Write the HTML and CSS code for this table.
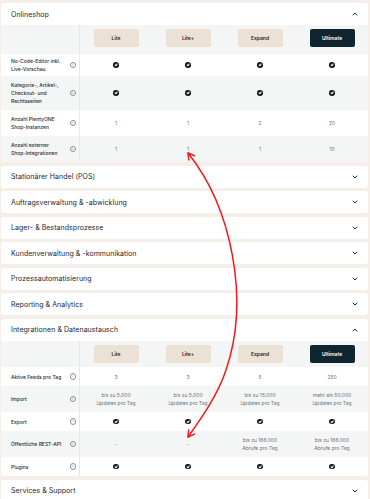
FILE: index.html
```html
<!DOCTYPE html>
<html lang="de">
<head>
  <meta charset="UTF-8" />
  <meta name="viewport" content="width=device-width, initial-scale=1" />
  <title>Tarifvergleich</title>
  <link rel="stylesheet" href="styles.css">
</head>
<body>
  <div class="page">

    <section class="panel">
      <div class="panel-head">
        <span>Onlineshop</span>
        <svg class="chev" viewBox="0 0 6 4"><polyline points="1,3 3,1 5,3" /></svg>
      </div>
      <div class="table">
        <div class="row tiers tall">
          <div class="label"></div>
          <div class="cell"><span class="tier">Lite</span></div>
          <div class="cell"><span class="tier">Lite+</span></div>
          <div class="cell"><span class="tier">Expand</span></div>
          <div class="cell"><span class="tier dark">Ultimate</span></div>
        </div>
        <div class="row tight">
          <div class="label"><span>No-Code-Editor inkl. Live-Vorschau</span><i class="info">i</i></div>
          <div class="cell"><b class="check"></b></div>
          <div class="cell"><b class="check"></b></div>
          <div class="cell"><b class="check"></b></div>
          <div class="cell"><b class="check"></b></div>
        </div>
        <div class="row">
          <div class="label"><span>Kategorie-, Artikel-, Checkout- und Rechtsseiten</span><i class="info">i</i></div>
          <div class="cell"><b class="check"></b></div>
          <div class="cell"><b class="check"></b></div>
          <div class="cell"><b class="check"></b></div>
          <div class="cell"><b class="check"></b></div>
        </div>
        <div class="row">
          <div class="label"><span>Anzahl PlentyONE Shop-Instanzen</span><i class="info">i</i></div>
          <div class="cell">1</div>
          <div class="cell">1</div>
          <div class="cell">2</div>
          <div class="cell">20</div>
        </div>
        <div class="row">
          <div class="label"><span>Anzahl externer Shop-Integrationen</span><i class="info">i</i></div>
          <div class="cell">1</div>
          <div class="cell">1</div>
          <div class="cell">1</div>
          <div class="cell">10</div>
        </div>
      </div>
    </section>

    <section class="panel">
      <div class="panel-head">
        <span>Stationärer Handel (POS)</span>
        <svg class="chev" viewBox="0 0 6 4"><polyline points="1,1 3,3 5,1" /></svg>
      </div>
    </section>
    <section class="panel">
      <div class="panel-head">
        <span>Auftragsverwaltung &amp; -abwicklung</span>
        <svg class="chev" viewBox="0 0 6 4"><polyline points="1,1 3,3 5,1" /></svg>
      </div>
    </section>
    <section class="panel">
      <div class="panel-head">
        <span>Lager- &amp; Bestandsprozesse</span>
        <svg class="chev" viewBox="0 0 6 4"><polyline points="1,1 3,3 5,1" /></svg>
      </div>
    </section>
    <section class="panel">
      <div class="panel-head">
        <span>Kundenverwaltung &amp; -kommunikation</span>
        <svg class="chev" viewBox="0 0 6 4"><polyline points="1,1 3,3 5,1" /></svg>
      </div>
    </section>
    <section class="panel">
      <div class="panel-head">
        <span>Prozessautomatisierung</span>
        <svg class="chev" viewBox="0 0 6 4"><polyline points="1,1 3,3 5,1" /></svg>
      </div>
    </section>
    <section class="panel">
      <div class="panel-head">
        <span>Reporting &amp; Analytics</span>
        <svg class="chev" viewBox="0 0 6 4"><polyline points="1,1 3,3 5,1" /></svg>
      </div>
    </section>

    <section class="panel">
      <div class="panel-head">
        <span>Integrationen &amp; Datenaustausch</span>
        <svg class="chev" viewBox="0 0 6 4"><polyline points="1,3 3,1 5,3" /></svg>
      </div>
      <div class="table">
        <div class="row tiers">
          <div class="label"></div>
          <div class="cell"><span class="tier">Lite</span></div>
          <div class="cell"><span class="tier">Lite+</span></div>
          <div class="cell"><span class="tier">Expand</span></div>
          <div class="cell"><span class="tier dark">Ultimate</span></div>
        </div>
        <div class="row">
          <div class="label"><span>Aktive Feeds pro Tag</span><i class="info">i</i></div>
          <div class="cell">3</div>
          <div class="cell">3</div>
          <div class="cell">5</div>
          <div class="cell">250</div>
        </div>
        <div class="row">
          <div class="label"><span>Import</span><i class="info">i</i></div>
          <div class="cell">bis zu 5.000<br>Updates pro Tag</div>
          <div class="cell">bis zu 5.000<br>Updates pro Tag</div>
          <div class="cell">bis zu 15.000<br>Updates pro Tag</div>
          <div class="cell">mehr als 50.000<br>Updates pro Tag</div>
        </div>
        <div class="row">
          <div class="label"><span>Export</span><i class="info">i</i></div>
          <div class="cell"><b class="check"></b></div>
          <div class="cell"><b class="check"></b></div>
          <div class="cell"><b class="check"></b></div>
          <div class="cell"><b class="check"></b></div>
        </div>
        <div class="row">
          <div class="label"><span>Öffentliche REST-API</span><i class="info">i</i></div>
          <div class="cell">-</div>
          <div class="cell">-</div>
          <div class="cell">bis zu 166.000<br>Abrufe pro Tag</div>
          <div class="cell">bis zu 166.000<br>Abrufe pro Tag</div>
        </div>
        <div class="row">
          <div class="label"><span>Plugins</span><i class="info">i</i></div>
          <div class="cell"><b class="check"></b></div>
          <div class="cell"><b class="check"></b></div>
          <div class="cell"><b class="check"></b></div>
          <div class="cell"><b class="check"></b></div>
        </div>
      </div>
    </section>

    <section class="panel">
      <div class="panel-head">
        <span>Services &amp; Support</span>
        <svg class="chev" viewBox="0 0 6 4"><polyline points="1,1 3,3 5,1" /></svg>
      </div>
    </section>

  </div>

  <!-- red annotation arrow drawn over the page -->
  <svg class="annotation" width="370" height="499" viewBox="0 0 370 499">
    <path d="M188,153 C232,208 250,300 226,370 C218,395 200,420 188,437" />
    <polyline points="194.4,155.8 188,153 188.8,160" />
    <polyline points="194.4,434.1 188,437 188.6,430" />
  </svg>
</body>
</html>
```

FILE: styles.css
```css
body, html {
  margin: 0;
  padding: 0;
  background-color: #f6efe9;
  font-family: Inter, 'Noto Sans', sans-serif;
  color: #1d2b36;
}

.page {
  display: flex;
  flex-direction: column;
  gap: 3.5px;
  padding: 3px 2px 0 1px;
  height: 499px;
  overflow: hidden;
  box-sizing: border-box;
}

.panel {
  background-color: #ffffff;
  border-radius: 3px;
  overflow: hidden;
  flex-shrink: 0;
}

.panel-head {
  height: 22px;
  padding: 0 10px 0 10px;
  display: flex;
  align-items: center;
  justify-content: space-between;
  font-size: 7px;
  font-weight: 400;
  letter-spacing: 0.05px;
  color: #1a2731;
}

.chev {
  width: 6px;
  height: 4px;
  fill: none;
  stroke: #1d2b36;
  stroke-width: 1;
  stroke-linecap: round;
  stroke-linejoin: round;
}

.row {
  display: grid;
  grid-template-columns: 79px repeat(4, 1fr);
  min-height: 19px;
  font-size: 5px;
  line-height: 8px;
}

.row:nth-child(odd) {
  background-color: #f4f6f6;
}

.row.tight .label,
.row.tight .cell {
  padding-top: 3px;
  padding-bottom: 3px;
}

.label {
  display: flex;
  align-items: center;
  justify-content: space-between;
  padding: 5px 3px 5px 10px;
  border-right: 1px solid #e7e9e9;
  font-weight: 500;
  color: #1d2b36;
}

.label span {
  max-width: 52px;
}

.cell {
  display: flex;
  align-items: center;
  justify-content: center;
  text-align: center;
  padding: 5px 2px;
  color: #6b7378;
}

.tiers {
  min-height: 0;
}

.tiers .label,
.tiers .cell {
  padding: 4px 0;
}

.tiers.tall .label,
.tiers.tall .cell {
  padding: 3.5px 0 7px;
}

.tier {
  width: 45px;
  height: 18.5px;
  display: flex;
  align-items: center;
  justify-content: center;
  background-color: #ece1d5;
  border-radius: 2px;
  font-weight: 600;
  color: #1d2b36;
}

.tier.dark {
  background-color: #0f2530;
  color: #ffffff;
}

.info {
  width: 4.5px;
  height: 4.5px;
  border: 0.6px solid #8a9196;
  border-radius: 50%;
  font-style: normal;
  font-size: 3.5px;
  line-height: 4.5px;
  text-align: center;
  color: #8a9196;
  flex-shrink: 0;
}

.check {
  width: 5.5px;
  height: 5.5px;
  border-radius: 50%;
  background-color: #121a1f;
  position: relative;
}

.check::after {
  content: '';
  position: absolute;
  left: 1.9px;
  top: 1px;
  width: 1.2px;
  height: 2.4px;
  border-right: 0.8px solid #fff;
  border-bottom: 0.8px solid #fff;
  transform: rotate(40deg);
}

.annotation {
  position: absolute;
  top: 0;
  left: 0;
  pointer-events: none;
  fill: none;
  stroke: #f2191e;
  stroke-width: 1.5;
  stroke-linecap: round;
  stroke-linejoin: round;
}
```
